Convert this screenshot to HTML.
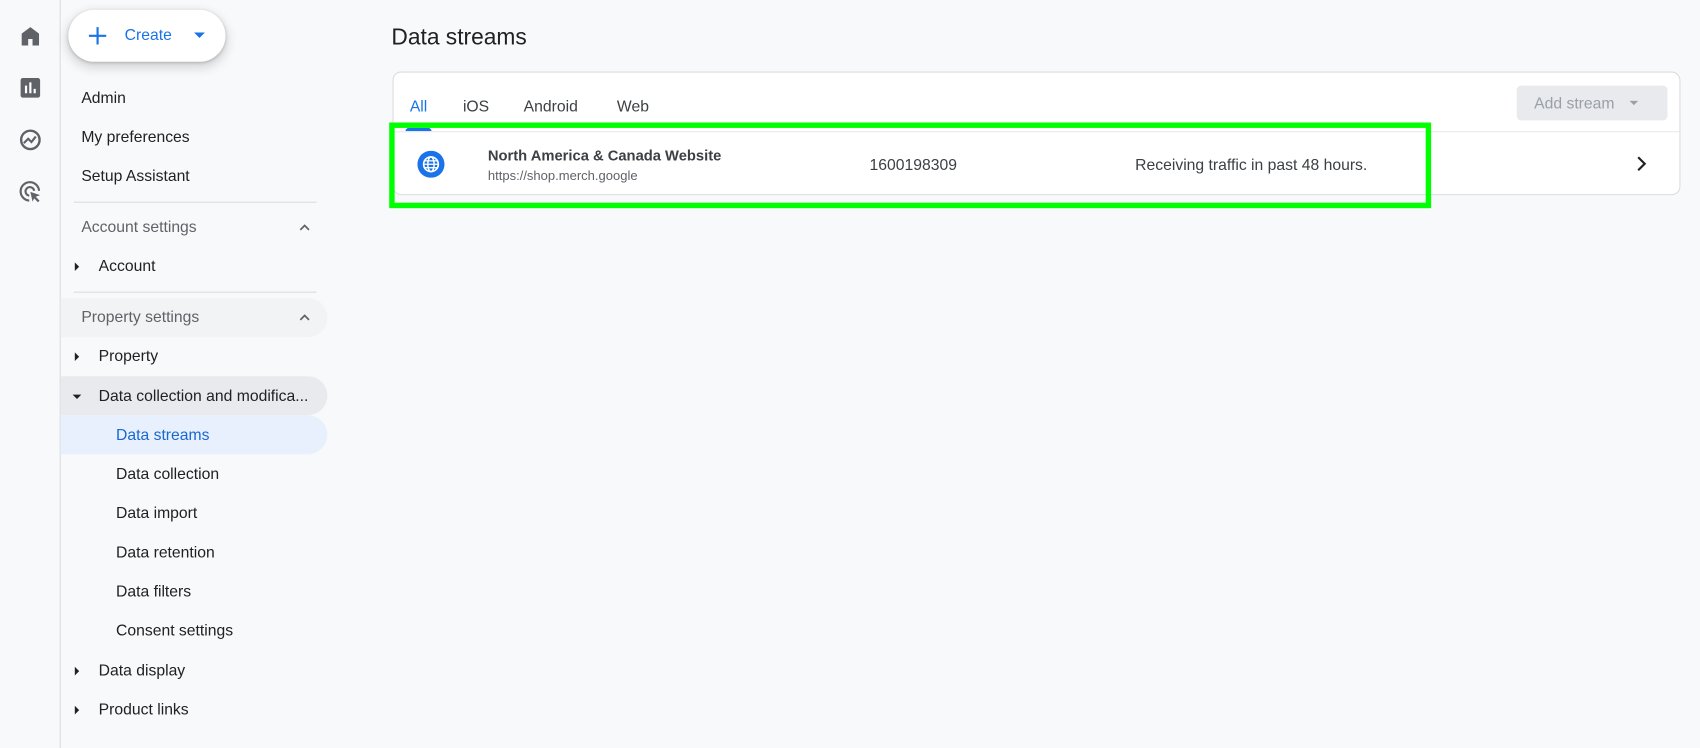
<!DOCTYPE html>
<html><head><meta charset="utf-8"><style>
*{margin:0;padding:0;box-sizing:border-box}
html,body{width:1700px;height:748px;overflow:hidden;background:#f8f9fa;font-family:"Liberation Sans",Roboto,sans-serif;}
#w{width:1568px;height:690px;transform:scale(1.08418);transform-origin:0 0;position:relative;background:#f8f9fa;}
.a{position:absolute}
.rail{left:0;top:0;width:56px;height:690px;border-right:1px solid #dadce0;}
.t{position:absolute;font-size:14.5px;color:#202124;white-space:nowrap;margin-top:1px}
.g{color:#5f6368}
.tri{position:absolute;width:0;height:0}
.r{border-top:4px solid transparent;border-bottom:4px solid transparent;border-left:4px solid #202124}
.d{border-left:4px solid transparent;border-right:4px solid transparent;border-top:4px solid #202124}
.hr{position:absolute;left:68px;width:224px;height:1px;background:#dadce0}
</style></head><body><div id="w">
<div class="a rail"></div>
<svg class="a" style="left:16px;top:21px" width="24" height="24" viewBox="0 0 24 24"><path d="M4 21V10l8-6 8 6v11h-6v-6h-4v6z" fill="#5f6368"/></svg>
<svg class="a" style="left:16px;top:69px" width="24" height="24" viewBox="0 0 24 24"><rect x="3" y="3" width="18" height="18" rx="2" fill="#5f6368"/><path d="M8 10v7M12 7v10M16 13v4" stroke="#fff" stroke-width="2"/></svg>
<svg class="a" style="left:16px;top:117px" width="24" height="24" viewBox="0 0 24 24"><circle cx="12" cy="12" r="8.5" fill="none" stroke="#5f6368" stroke-width="2.2"/><path d="M6 15l4-4 3 3 4-5" fill="none" stroke="#5f6368" stroke-width="2"/></svg>
<svg class="a" style="left:16px;top:165px" width="24" height="24" viewBox="0 0 24 24"><path d="M11 20a8.5 8.5 0 1 1 9-9" fill="none" stroke="#5f6368" stroke-width="2"/><path d="M11 15.5a4 4 0 1 1 4.5-4.5" fill="none" stroke="#5f6368" stroke-width="2"/><path d="M12 12l9 3-4 1.5 3.5 3.5-1.5 1.5-3.5-3.5L14 21z" fill="#5f6368"/></svg>
<div class="a" style="left:63px;top:9px;width:145px;height:48px;border-radius:24px;background:#fff;box-shadow:0 1px 3px rgba(60,64,67,.3),0 4px 8px 3px rgba(60,64,67,.15)"></div>
<svg class="a" style="left:80px;top:23px" width="20" height="20" viewBox="0 0 20 20"><path d="M10 2v16M2 10h16" stroke="#1a73e8" stroke-width="2"/></svg>
<div class="t" style="left:115px;top:24px;color:#1a73e8;font-size:14.5px">Create</div>
<div class="tri d" style="left:179px;top:30px;border-top-color:#1a73e8;border-width:5px 5px 0 5px"></div>

<div class="t" style="left:75px;top:82px">Admin</div>
<div class="t" style="left:75px;top:118px">My preferences</div>
<div class="t" style="left:75px;top:154px">Setup Assistant</div>
<div class="hr" style="top:186px"></div>
<div class="t g" style="left:75px;top:201px">Account settings</div>
<svg class="a" style="left:274px;top:203px" width="14" height="14" viewBox="0 0 14 14"><path d="M3 9l4-4 4 4" fill="none" stroke="#5f6368" stroke-width="1.6"/></svg>
<div class="tri r" style="left:69px;top:242px"></div>
<div class="t" style="left:91px;top:237px">Account</div>
<div class="hr" style="top:269px"></div>
<div class="a" style="left:56px;top:275px;width:246px;height:36px;background:#f1f3f4;border-radius:0 18px 18px 0"></div>
<div class="t g" style="left:75px;top:284px">Property settings</div>
<svg class="a" style="left:274px;top:286px" width="14" height="14" viewBox="0 0 14 14"><path d="M3 9l4-4 4 4" fill="none" stroke="#5f6368" stroke-width="1.6"/></svg>
<div class="tri r" style="left:69px;top:325px"></div>
<div class="t" style="left:91px;top:320px">Property</div>
<div class="a" style="left:56px;top:347px;width:246px;height:36px;background:#e8eaed;border-radius:0 18px 18px 0"></div>
<div class="tri d" style="left:67px;top:364px"></div>
<div class="t" style="left:91px;top:357px">Data collection and modifica...</div>
<div class="a" style="left:56px;top:383px;width:246px;height:36px;background:#e8f0fe;border-radius:0 18px 18px 0"></div>
<div class="t" style="left:107px;top:393px;color:#1967d2">Data streams</div>
<div class="t" style="left:107px;top:429px">Data collection</div>
<div class="t" style="left:107px;top:465px">Data import</div>
<div class="t" style="left:107px;top:501px">Data retention</div>
<div class="t" style="left:107px;top:537px">Data filters</div>
<div class="t" style="left:107px;top:573px">Consent settings</div>
<div class="tri r" style="left:69px;top:615px"></div>
<div class="t" style="left:91px;top:610px">Data display</div>
<div class="tri r" style="left:69px;top:651px"></div>
<div class="t" style="left:91px;top:646px">Product links</div>

<div class="t" style="left:361px;top:22px;font-size:21px">Data streams</div>
<div class="a" style="left:362px;top:66px;width:1188px;height:114px;background:#fff;border:1px solid #dadce0;border-radius:8px"></div>
<div class="t" style="left:378px;top:90px;color:#1a73e8">All</div>
<div class="t g" style="left:427px;top:90px;color:#3c4043">iOS</div>
<div class="t g" style="left:483px;top:90px;color:#3c4043">Android</div>
<div class="t g" style="left:569px;top:90px;color:#3c4043">Web</div>
<div class="a" style="left:374px;top:118px;width:24px;height:3px;background:#1a73e8;border-radius:3px 3px 0 0"></div>
<div class="a" style="left:363px;top:121px;width:1186px;height:1px;background:#e8eaed"></div>
<div class="a" style="left:1399px;top:79px;width:139px;height:32px;background:#e8eaed;border-radius:4px"></div>
<div class="t" style="left:1415px;top:87px;color:#9aa0a6">Add stream</div>
<div class="tri d" style="left:1503px;top:93px;border-top-color:#9aa0a6"></div>
<svg class="a" style="left:385px;top:139px" width="25" height="25" viewBox="0 0 24 24"><circle cx="12" cy="12" r="12" fill="#1a73e8"/><circle cx="12" cy="12" r="6.5" fill="none" stroke="#fff" stroke-width="1.5"/><ellipse cx="12" cy="12" rx="2.8" ry="6.5" fill="none" stroke="#fff" stroke-width="1.3"/><path d="M5.5 12h13M6.5 9h11M6.5 15h11" stroke="#fff" stroke-width="1.2"/></svg>
<div class="t" style="left:450px;top:135px;color:#3c4043;font-weight:bold;font-size:13.6px">North America &amp; Canada Website</div>
<div class="t g" style="left:450px;top:154px;font-size:12px">https://shop.merch.google</div>
<div class="t" style="left:802px;top:144px;color:#3c4043">1600198309</div>
<div class="t" style="left:1047px;top:144px;color:#3c4043">Receiving traffic in past 48 hours.</div>
<svg class="a" style="left:1506px;top:142px" width="16" height="18" viewBox="0 0 16 18"><path d="M5 3l6 6-6 6" fill="none" stroke="#202124" stroke-width="2"/></svg>
<div class="a" style="left:359px;top:113px;width:961px;height:79px;border:5px solid #00ff00"></div>
</div></body></html>
